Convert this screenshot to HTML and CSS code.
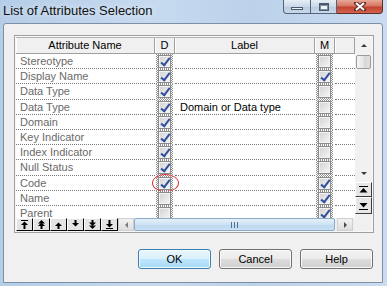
FILE: index.html
```html
<!DOCTYPE html>
<html lang="en">
<head>
    <meta charset="UTF-8">
    <title>List of Attributes Selection</title>
    <link rel="stylesheet" href="styles.css">
</head>
<body>
<div class="window">
    <div class="titlebar">
        <span class="title">List of Attributes Selection</span>
        <div class="caption">
            <span class="cap min"><i></i></span>
            <span class="cap max"><i></i></span>
            <span class="cap close">
                <svg width="12" height="9" viewBox="0 0 12 9">
                    <path d="M2 1 L10 8 M10 1 L2 8" stroke="#5b2a22" stroke-width="4" stroke-linecap="square"/>
                    <path d="M2 1 L10 8 M10 1 L2 8" stroke="#fff" stroke-width="2.2"/>
                </svg>
            </span>
        </div>
    </div>

    <div class="client">
        <div class="grid">
            <div class="grid-top">
                <div class="table">
                    <div class="row head">
                        <div>Attribute Name</div>
                        <div>D</div>
                        <div>Label</div>
                        <div>M</div>
                        <div></div>
                    </div>
                    <div class="row">
                        <div class="txt">Stereotype</div>
                        <div class="ck"><span class="chk on"></span></div>
                        <div class="lbl"></div>
                        <div class="ck"><span class="chk"></span></div>
                        <div class="blank"></div>
                    </div>
                    <div class="row">
                        <div class="txt">Display Name</div>
                        <div class="ck"><span class="chk on"></span></div>
                        <div class="lbl"></div>
                        <div class="ck"><span class="chk on"></span></div>
                        <div class="blank"></div>
                    </div>
                    <div class="row">
                        <div class="txt">Data Type</div>
                        <div class="ck"><span class="chk on"></span></div>
                        <div class="lbl"></div>
                        <div class="ck"><span class="chk"></span></div>
                        <div class="blank"></div>
                    </div>
                    <div class="row">
                        <div class="txt">Data Type</div>
                        <div class="ck"><span class="chk on"></span></div>
                        <div class="lbl">Domain or Data type</div>
                        <div class="ck"><span class="chk"></span></div>
                        <div class="blank"></div>
                    </div>
                    <div class="row">
                        <div class="txt">Domain</div>
                        <div class="ck"><span class="chk on"></span></div>
                        <div class="lbl"></div>
                        <div class="ck"><span class="chk"></span></div>
                        <div class="blank"></div>
                    </div>
                    <div class="row">
                        <div class="txt">Key Indicator</div>
                        <div class="ck"><span class="chk on"></span></div>
                        <div class="lbl"></div>
                        <div class="ck"><span class="chk"></span></div>
                        <div class="blank"></div>
                    </div>
                    <div class="row">
                        <div class="txt">Index Indicator</div>
                        <div class="ck"><span class="chk on"></span></div>
                        <div class="lbl"></div>
                        <div class="ck"><span class="chk"></span></div>
                        <div class="blank"></div>
                    </div>
                    <div class="row">
                        <div class="txt">Null Status</div>
                        <div class="ck"><span class="chk on"></span></div>
                        <div class="lbl"></div>
                        <div class="ck"><span class="chk"></span></div>
                        <div class="blank"></div>
                    </div>
                    <div class="row">
                        <div class="txt">Code</div>
                        <div class="ck"><span class="chk on"></span><span class="mark"></span></div>
                        <div class="lbl"></div>
                        <div class="ck"><span class="chk on"></span></div>
                        <div class="blank"></div>
                    </div>
                    <div class="row">
                        <div class="txt">Name</div>
                        <div class="ck"><span class="chk"></span></div>
                        <div class="lbl"></div>
                        <div class="ck"><span class="chk on"></span></div>
                        <div class="blank"></div>
                    </div>
                    <div class="row">
                        <div class="txt">Parent</div>
                        <div class="ck"><span class="chk"></span></div>
                        <div class="lbl"></div>
                        <div class="ck"><span class="chk on"></span></div>
                        <div class="blank"></div>
                    </div>
                </div>

                <div class="vscroll">
                    <div class="sb-arrow"><span class="tri-up"></span></div>
                    <div class="sb-thumb"></div>
                    <div class="sb-track"></div>
                    <div class="sb-arrow"><span class="tri-down"></span></div>
                    <div class="sb-btn">
                        <svg width="9" height="8" viewBox="0 0 9 8"><rect x="0" y="0" width="9" height="1"/><polygon points="4.5,2 0.5,6.5 8.5,6.5"/></svg>
                    </div>
                    <div class="sb-btn tall">
                        <svg width="9" height="8" viewBox="0 0 9 8"><polygon points="0.5,1 8.5,1 4.5,5.5"/><rect x="0" y="7" width="9" height="1"/></svg>
                    </div>
                </div>
            </div>

            <div class="grid-bottom">
                <span class="tb">
                    <svg width="7" height="9" viewBox="0 0 7 9"><rect x="0" y="0" width="7" height="1"/><polygon points="3.5,1.5 0,5 7,5"/><rect x="2.5" y="5" width="2" height="4"/></svg>
                </span>
                <span class="tb">
                    <svg width="7" height="9" viewBox="0 0 7 9"><polygon points="3.5,0 0,3.5 7,3.5"/><polygon points="3.5,2.5 0,6 7,6"/><rect x="2.5" y="6" width="2" height="3"/></svg>
                </span>
                <span class="tb">
                    <svg width="7" height="9" viewBox="0 0 7 9"><polygon points="3.5,2.5 0,6 7,6"/><rect x="2.5" y="6" width="2" height="3"/></svg>
                </span>
                <span class="tb">
                    <svg width="7" height="9" viewBox="0 0 7 9"><rect x="2.5" y="0" width="2" height="3"/><polygon points="0,3 7,3 3.5,6.5"/></svg>
                </span>
                <span class="tb">
                    <svg width="7" height="9" viewBox="0 0 7 9"><rect x="2.5" y="0" width="2" height="3"/><polygon points="0,2.5 7,2.5 3.5,6"/><polygon points="0,5.5 7,5.5 3.5,9"/></svg>
                </span>
                <span class="tb">
                    <svg width="7" height="9" viewBox="0 0 7 9"><rect x="2.5" y="0" width="2" height="4"/><polygon points="0,4 7,4 3.5,7.5"/><rect x="0" y="8" width="7" height="1"/></svg>
                </span>
                <span class="harrow"><span class="tri-left"></span></span>
                <span class="hthumb"><span class="grip"></span></span>
                <span class="harrow right"><span class="tri-right"></span></span>
            </div>
        </div>

        <div class="buttons">
            <button class="btn default">OK</button>
            <button class="btn">Cancel</button>
            <button class="btn">Help</button>
        </div>
    </div>
</div>
</body>
</html>
```

FILE: styles.css
```css
* {
    box-sizing: border-box;
}
body {
    margin: 0;
    font-family: "Liberation Sans", Arial, sans-serif;
    font-size: 11px;
}
.window {
    width: 387px;
    height: 286px;
    display: flex;
    flex-direction: column;
    background: linear-gradient(to right, #b4cde8 0%, #c6daef 40%, #bcd2ea 65%, #c9dcf0 100%);
}

/* title bar */
.titlebar {
    height: 23px;
    flex-shrink: 0;
    display: flex;
}
.title {
    font-size: 13px;
    line-height: 15px;
    padding: 3px 0 0 3px;
    color: #111;
    text-shadow: 0 0 6px #eef5fc;
}
.caption {
    margin-left: auto;
    margin-right: 4px;
    height: 14px;
    display: flex;
}
.cap {
    height: 14px;
    border: 1px solid #53637a;
    border-top: none;
    display: flex;
    align-items: center;
    justify-content: center;
    background: linear-gradient(#e6edf5, #cad9e9 50%, #b8cade 51%, #c9d9ea);
}
.cap.min {
    width: 28px;
    border-radius: 0 0 0 4px;
}
.cap.max {
    width: 26px;
    border-left: none;
}
.cap.close {
    width: 46px;
    border-left: none;
    border-color: #5e2c26;
    border-radius: 0 0 4px 0;
    background: linear-gradient(#e8a898, #d67664 45%, #c4412f 55%, #d4654f);
}
.cap.min i {
    display: block;
    width: 12px;
    height: 3px;
    margin-top: 4px;
    border: 1px solid #4c5a6c;
    background: #eef3f8;
}
.cap.max i {
    display: block;
    width: 10px;
    height: 8px;
    border: 1px solid #4c5a6c;
    border-top-width: 2px;
    background: #eef3f8;
    box-shadow: inset 0 0 0 1px #7f8ea0;
}

/* client area */
.client {
    flex: 1;
    margin: 0 4px 3px 3px;
    border: 1px solid #7d8fa5;
    border-radius: 3px 3px 0 0;
    background: #f0f0f0;
}
.grid {
    margin: 11px 0 0 10px;
    width: 360px;
    border: 1px solid #a0a0a0;
    padding: 1px;
    background: #f7f7f7;
}
.grid-top {
    display: flex;
    height: 181px;
}
.table {
    width: 339px;
    overflow: hidden;
    background: #fff;
}
.row {
    display: grid;
    grid-template-columns: 139px 20px 140px 20px 20px;
    height: 15.2px;
}
.row > div {
    line-height: 14px;
    white-space: nowrap;
}
.head {
    height: 17px;
    background: #f0f0f0;
    border-top: 1px solid #b4b4b4;
    border-bottom: 1px solid #a0a0a0;
    color: #000;
}
.head > div {
    text-align: center;
    line-height: 15px;
    border-right: 1px solid #a0a0a0;
    box-shadow: inset 1px 0 #fff;
}
.txt, .lbl, .blank {
    border-bottom: 1px dotted #7a7a7a;
}
.txt {
    padding-left: 4px;
    color: #6a6a6a;
}
.lbl {
    padding-left: 5px;
    color: #000;
}
.ck {
    position: relative;
    padding: 0 2px 0 1px;
    background: repeating-conic-gradient(#8f8f8f 0 25%, #fff 0 50%) 0 0 / 2px 2px;
    background-clip: content-box;
    display: flex;
    align-items: center;
    justify-content: center;
}
.chk {
    position: relative;
    width: 13px;
    height: 13px;
    border: 1px solid #8c8c8c;
    background: linear-gradient(135deg, #d2d2d2, #f6f6f6);
    box-shadow: inset 0 0 0 1px #f2f2f2;
}
.chk.on::after {
    content: "";
    position: absolute;
    left: 4px;
    top: 0px;
    width: 3px;
    height: 8px;
    border: solid #2f4f9f;
    border-width: 0 2px 2px 0;
    transform: rotate(38deg);
}
.mark {
    position: absolute;
    left: -3px;
    top: -2px;
    width: 27px;
    height: 18px;
    border: 1px solid #e22d2d;
    border-radius: 50%;
}

/* vertical scroll */
.vscroll {
    width: 17px;
    display: flex;
    flex-direction: column;
    background: #f1f1f1;
}
.sb-arrow {
    height: 17px;
    display: flex;
    align-items: center;
    justify-content: center;
}
.tri-up, .tri-down, .tri-left, .tri-right {
    width: 0;
    height: 0;
    border: 3px solid transparent;
}
.tri-up {
    border-bottom: 3px solid #3a3a3a;
    border-top: none;
    border-left-width: 3.5px;
    border-right-width: 3.5px;
}
.tri-down {
    border-top: 3px solid #3a3a3a;
    border-bottom: none;
    border-left-width: 3.5px;
    border-right-width: 3.5px;
}
.sb-thumb {
    height: 14px;
    margin: 1px 1px 0 1px;
    border: 1px solid #9a9a9a;
    border-radius: 2px;
    background: linear-gradient(to right, #f6f6f6, #e4e4e4 50%, #d6d6d6 51%, #e0e0e0);
}
.sb-track {
    flex: 1;
}
.sb-btn {
    height: 15px;
    display: flex;
    align-items: center;
    justify-content: center;
    border: 1px solid;
    border-color: #fff #3c3c3c #3c3c3c #fff;
    background: #e6e6e6;
}
.sb-btn.tall {
    height: 17px;
    margin-bottom: 4px;
}

/* bottom toolbar */
.grid-bottom {
    display: flex;
    height: 13px;
    background: #f0f0f0;
}
.tb {
    width: 17px;
    display: flex;
    align-items: center;
    justify-content: center;
    border: 1px solid;
    border-color: #fff #000 #000 #fff;
    background: #e4e4e4;
}
.harrow {
    width: 16px;
    display: flex;
    align-items: center;
    justify-content: center;
    border: 1px solid #cfcfcf;
    background: linear-gradient(#f2f2f2, #dedede);
}
.harrow.right {
    margin-left: 2px;
}
.tri-left {
    border-right: 3px solid #7a7a7a;
    border-left: none;
    border-top-width: 3.5px;
    border-bottom-width: 3.5px;
}
.tri-right {
    border-left: 3px solid #4a4a4a;
    border-right: none;
    border-top-width: 3.5px;
    border-bottom-width: 3.5px;
}
.hthumb {
    width: 201px;
    display: flex;
    align-items: center;
    justify-content: center;
    border: 1px solid #8aabca;
    border-radius: 2px;
    background: linear-gradient(#e4f0fa, #cfe3f4 50%, #bcd7ef 51%, #c9e0f3);
}
.grip {
    width: 7px;
    height: 6px;
    background: repeating-linear-gradient(to right, #4f7196 0 1px, transparent 1px 3px);
}

/* dialog buttons */
.buttons {
    display: flex;
    justify-content: flex-end;
    gap: 8px;
    margin-top: 16px;
    padding-right: 9px;
}
.btn {
    width: 73px;
    height: 20px;
    padding: 0;
    font-family: "Liberation Sans", Arial, sans-serif;
    font-size: 11px;
    color: #000;
    border: 1px solid #707070;
    border-radius: 3px;
    background: linear-gradient(#f2f2f2, #ebebeb 50%, #dddddd 51%, #cfcfcf);
    box-shadow: inset 0 0 0 1px #fbfbfb;
}
.btn.default {
    border-color: #3c7fb1;
    background: linear-gradient(#eaf6fd, #d9f0fc 50%, #bee6fd 51%, #a7d9f5);
    box-shadow: inset 0 0 0 1px #f2fafe;
}
```
